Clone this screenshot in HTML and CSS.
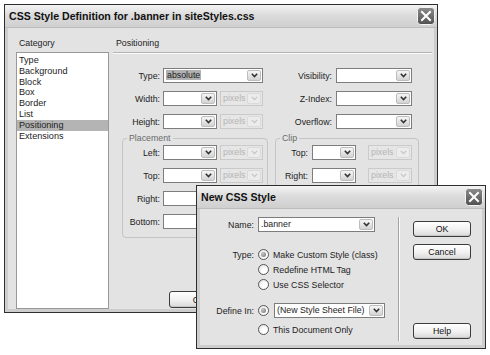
FILE: index.html
```html
<!DOCTYPE html>
<html lang="en">
<head>
    <meta charset="UTF-8">
    <title>CSS Style Definition</title>
    <link rel="stylesheet" href="styles.css">
</head>
<body>
<div class="desk">

    <!-- CSS Style Definition dialog -->
    <div class="window main-window">
        <div class="titlebar">
            <span class="title">CSS Style Definition for .banner in siteStyles.css</span>
            <svg class="close-btn" width="18" height="18" viewBox="0 0 18 18">
                <defs>
                    <linearGradient id="cg1" x1="0" y1="0" x2="0" y2="1">
                        <stop offset="0" stop-color="#8c8c8c"/>
                        <stop offset="1" stop-color="#505050"/>
                    </linearGradient>
                </defs>
                <rect x="0.5" y="0.5" width="17" height="17" rx="3" fill="url(#cg1)" stroke="#f4f4f4"/>
                <path d="M5 5 L13 13 M13 5 L5 13" stroke="#fff" stroke-width="2" stroke-linecap="square"/>
            </svg>
        </div>
        <div class="main-body">
            <div class="cat-col">
                <div class="col-label">Category</div>
                <ul class="cat-list">
                    <li>Type</li>
                    <li>Background</li>
                    <li>Block</li>
                    <li>Box</li>
                    <li>Border</li>
                    <li>List</li>
                    <li class="selected">Positioning</li>
                    <li>Extensions</li>
                </ul>
            </div>
            <div class="panel">
                <div class="panel-head">Positioning</div>

                <div class="pos-grid">
                    <span class="field-label">Type:</span>
                    <div class="combo"><span class="val"><span class="hl">absolute</span></span><span class="arrow"><svg width="7" height="5" viewBox="0 0 7 5"><polyline points="0.8,0.8 3.5,3.6 6.2,0.8" fill="none" stroke="#333" stroke-width="1.6"/></svg></span></div>
                    <span class="field-label wide-label">Visibility:</span>
                    <div class="combo"><span class="val"></span><span class="arrow"><svg width="7" height="5" viewBox="0 0 7 5"><polyline points="0.8,0.8 3.5,3.6 6.2,0.8" fill="none" stroke="#333" stroke-width="1.6"/></svg></span></div>

                    <span class="field-label">Width:</span>
                    <div class="pair">
                        <div class="combo w54"><span class="val"></span><span class="arrow"><svg width="7" height="5" viewBox="0 0 7 5"><polyline points="0.8,0.8 3.5,3.6 6.2,0.8" fill="none" stroke="#333" stroke-width="1.6"/></svg></span></div>
                        <div class="combo off w43"><span class="val">pixels</span><span class="arrow"><svg width="7" height="5" viewBox="0 0 7 5"><polyline points="0.8,0.8 3.5,3.6 6.2,0.8" fill="none" stroke="#c4c4c4" stroke-width="1.2"/></svg></span></div>
                    </div>
                    <span class="field-label wide-label">Z-Index:</span>
                    <div class="combo"><span class="val"></span><span class="arrow"><svg width="7" height="5" viewBox="0 0 7 5"><polyline points="0.8,0.8 3.5,3.6 6.2,0.8" fill="none" stroke="#333" stroke-width="1.6"/></svg></span></div>

                    <span class="field-label">Height:</span>
                    <div class="pair">
                        <div class="combo w54"><span class="val"></span><span class="arrow"><svg width="7" height="5" viewBox="0 0 7 5"><polyline points="0.8,0.8 3.5,3.6 6.2,0.8" fill="none" stroke="#333" stroke-width="1.6"/></svg></span></div>
                        <div class="combo off w43"><span class="val">pixels</span><span class="arrow"><svg width="7" height="5" viewBox="0 0 7 5"><polyline points="0.8,0.8 3.5,3.6 6.2,0.8" fill="none" stroke="#c4c4c4" stroke-width="1.2"/></svg></span></div>
                    </div>
                    <span class="field-label wide-label">Overflow:</span>
                    <div class="combo"><span class="val"></span><span class="arrow"><svg width="7" height="5" viewBox="0 0 7 5"><polyline points="0.8,0.8 3.5,3.6 6.2,0.8" fill="none" stroke="#333" stroke-width="1.6"/></svg></span></div>
                </div>

                <div class="groups">
                    <fieldset class="group placement">
                        <legend>Placement</legend>
                        <div class="group-rows">
                            <div class="g-row"><span class="g-label">Left:</span><div class="combo w54"><span class="val"></span><span class="arrow"><svg width="7" height="5" viewBox="0 0 7 5"><polyline points="0.8,0.8 3.5,3.6 6.2,0.8" fill="none" stroke="#333" stroke-width="1.6"/></svg></span></div><div class="combo off w43"><span class="val">pixels</span><span class="arrow"><svg width="7" height="5" viewBox="0 0 7 5"><polyline points="0.8,0.8 3.5,3.6 6.2,0.8" fill="none" stroke="#c4c4c4" stroke-width="1.2"/></svg></span></div></div>
                            <div class="g-row"><span class="g-label">Top:</span><div class="combo w54"><span class="val"></span><span class="arrow"><svg width="7" height="5" viewBox="0 0 7 5"><polyline points="0.8,0.8 3.5,3.6 6.2,0.8" fill="none" stroke="#333" stroke-width="1.6"/></svg></span></div><div class="combo off w43"><span class="val">pixels</span><span class="arrow"><svg width="7" height="5" viewBox="0 0 7 5"><polyline points="0.8,0.8 3.5,3.6 6.2,0.8" fill="none" stroke="#c4c4c4" stroke-width="1.2"/></svg></span></div></div>
                            <div class="g-row"><span class="g-label">Right:</span><div class="combo w54"><span class="val"></span><span class="arrow"><svg width="7" height="5" viewBox="0 0 7 5"><polyline points="0.8,0.8 3.5,3.6 6.2,0.8" fill="none" stroke="#333" stroke-width="1.6"/></svg></span></div><div class="combo off w43"><span class="val">pixels</span><span class="arrow"><svg width="7" height="5" viewBox="0 0 7 5"><polyline points="0.8,0.8 3.5,3.6 6.2,0.8" fill="none" stroke="#c4c4c4" stroke-width="1.2"/></svg></span></div></div>
                            <div class="g-row"><span class="g-label">Bottom:</span><div class="combo w54"><span class="val"></span><span class="arrow"><svg width="7" height="5" viewBox="0 0 7 5"><polyline points="0.8,0.8 3.5,3.6 6.2,0.8" fill="none" stroke="#333" stroke-width="1.6"/></svg></span></div><div class="combo off w43"><span class="val">pixels</span><span class="arrow"><svg width="7" height="5" viewBox="0 0 7 5"><polyline points="0.8,0.8 3.5,3.6 6.2,0.8" fill="none" stroke="#c4c4c4" stroke-width="1.2"/></svg></span></div></div>
                        </div>
                    </fieldset>
                    <fieldset class="group clip">
                        <legend>Clip</legend>
                        <div class="group-rows">
                            <div class="g-row"><span class="g-label">Top:</span><div class="combo w44"><span class="val"></span><span class="arrow"><svg width="7" height="5" viewBox="0 0 7 5"><polyline points="0.8,0.8 3.5,3.6 6.2,0.8" fill="none" stroke="#333" stroke-width="1.6"/></svg></span></div><div class="combo off w44"><span class="val">pixels</span><span class="arrow"><svg width="7" height="5" viewBox="0 0 7 5"><polyline points="0.8,0.8 3.5,3.6 6.2,0.8" fill="none" stroke="#c4c4c4" stroke-width="1.2"/></svg></span></div></div>
                            <div class="g-row"><span class="g-label">Right:</span><div class="combo w44"><span class="val"></span><span class="arrow"><svg width="7" height="5" viewBox="0 0 7 5"><polyline points="0.8,0.8 3.5,3.6 6.2,0.8" fill="none" stroke="#333" stroke-width="1.6"/></svg></span></div><div class="combo off w44"><span class="val">pixels</span><span class="arrow"><svg width="7" height="5" viewBox="0 0 7 5"><polyline points="0.8,0.8 3.5,3.6 6.2,0.8" fill="none" stroke="#c4c4c4" stroke-width="1.2"/></svg></span></div></div>
                            <div class="g-row"><span class="g-label">Bottom:</span><div class="combo w44"><span class="val"></span><span class="arrow"><svg width="7" height="5" viewBox="0 0 7 5"><polyline points="0.8,0.8 3.5,3.6 6.2,0.8" fill="none" stroke="#333" stroke-width="1.6"/></svg></span></div><div class="combo off w44"><span class="val">pixels</span><span class="arrow"><svg width="7" height="5" viewBox="0 0 7 5"><polyline points="0.8,0.8 3.5,3.6 6.2,0.8" fill="none" stroke="#c4c4c4" stroke-width="1.2"/></svg></span></div></div>
                            <div class="g-row"><span class="g-label">Left:</span><div class="combo w44"><span class="val"></span><span class="arrow"><svg width="7" height="5" viewBox="0 0 7 5"><polyline points="0.8,0.8 3.5,3.6 6.2,0.8" fill="none" stroke="#333" stroke-width="1.6"/></svg></span></div><div class="combo off w44"><span class="val">pixels</span><span class="arrow"><svg width="7" height="5" viewBox="0 0 7 5"><polyline points="0.8,0.8 3.5,3.6 6.2,0.8" fill="none" stroke="#c4c4c4" stroke-width="1.2"/></svg></span></div></div>
                        </div>
                    </fieldset>
                </div>

                <div class="btn-row">
                    <button class="btn">OK</button>
                    <button class="btn">Cancel</button>
                    <button class="btn">Apply</button>
                    <button class="btn">Help</button>
                </div>
            </div>
        </div>
    </div>

    <!-- New CSS Style dialog -->
    <div class="window new-window">
        <div class="titlebar">
            <span class="title">New CSS Style</span>
            <svg class="close-btn" width="18" height="18" viewBox="0 0 18 18">
                <defs>
                    <linearGradient id="cg2" x1="0" y1="0" x2="0" y2="1">
                        <stop offset="0" stop-color="#8c8c8c"/>
                        <stop offset="1" stop-color="#505050"/>
                    </linearGradient>
                </defs>
                <rect x="0.5" y="0.5" width="17" height="17" rx="3" fill="url(#cg2)" stroke="#f4f4f4"/>
                <path d="M5 5 L13 13 M13 5 L5 13" stroke="#fff" stroke-width="2" stroke-linecap="square"/>
            </svg>
        </div>
        <div class="new-body">
            <div class="new-form">
                <div class="n-row">
                    <span class="n-label">Name:</span>
                    <div class="combo w117"><span class="val">.banner</span><span class="arrow"><svg width="7" height="5" viewBox="0 0 7 5"><polyline points="0.8,0.8 3.5,3.6 6.2,0.8" fill="none" stroke="#333" stroke-width="1.6"/></svg></span></div>
                </div>
                <div class="n-row type-first">
                    <span class="n-label">Type:</span>
                    <span class="radio checked"></span><span class="r-text">Make Custom Style (class)</span>
                </div>
                <div class="n-row">
                    <span class="n-label"></span>
                    <span class="radio"></span><span class="r-text">Redefine HTML Tag</span>
                </div>
                <div class="n-row">
                    <span class="n-label"></span>
                    <span class="radio"></span><span class="r-text">Use CSS Selector</span>
                </div>
                <div class="n-row define-row">
                    <span class="n-label">Define In:</span>
                    <span class="radio checked"></span>
                    <div class="combo w111"><span class="val">(New Style Sheet File)</span><span class="arrow"><svg width="7" height="5" viewBox="0 0 7 5"><polyline points="0.8,0.8 3.5,3.6 6.2,0.8" fill="none" stroke="#333" stroke-width="1.6"/></svg></span></div>
                </div>
                <div class="n-row doc-row">
                    <span class="n-label"></span>
                    <span class="radio"></span><span class="r-text">This Document Only</span>
                </div>
            </div>
            <div class="sep"></div>
            <div class="new-btns">
                <button class="btn">OK</button>
                <button class="btn">Cancel</button>
                <button class="btn help">Help</button>
            </div>
        </div>
    </div>

</div>
</body>
</html>
```

FILE: styles.css
```css
/* Reset */
* {
    margin: 0;
    padding: 0;
    box-sizing: border-box;
}

body {
    background: #fff;
    font-family: 'Liberation Sans', Arial, sans-serif;
    font-size: 8.8px;
    color: #1c1c1c;
}

.desk {
    position: relative;
    width: 490px;
    height: 355px;
    overflow: hidden;
}

/* Windows */
.window {
    position: absolute;
    display: flex;
    flex-direction: column;
    background: #e3e3e3;
    border: 1px solid #2e2e2e;
    box-shadow: inset 0 0 0 3px #cdcdcd;
}

.main-window {
    left: 4px;
    top: 4px;
    width: 434px;
    height: 309px;
}

.new-window {
    left: 196px;
    top: 185px;
    width: 290px;
    height: 164px;
}

.titlebar {
    flex: none;
    height: 23px;
    display: flex;
    align-items: center;
    justify-content: space-between;
    padding: 0 2px 0 4px;
    background: linear-gradient(#f4f4f4, #dcdcdc 45%, #cfcfcf);
    border-bottom: 1px solid #bcbcbc;
}

.title {
    font-weight: bold;
    font-size: 10.6px;
    color: #111;
}

.close-btn {
    display: block;
}

/* Combo boxes */
.combo {
    display: flex;
    height: 15px;
    background: #fff;
    border: 1px solid #7d7d7d;
}

.combo .val {
    flex: 1;
    padding-left: 2px;
    line-height: 13px;
    white-space: nowrap;
    overflow: hidden;
}

.combo .hl {
    background: #b0b0b0;
    padding: 0 1px;
}

.combo .arrow {
    flex: none;
    width: 14px;
    margin: 1px;
    display: flex;
    align-items: center;
    justify-content: center;
    border: 1px solid #bdbdbd;
    border-radius: 2px;
    background: linear-gradient(#f6f6f6, #d3d3d3);
}

.combo.off {
    background: #e6e6e6;
    border-color: #cacaca;
}

.combo.off .val {
    color: #b4b4b4;
}

.combo.off .arrow {
    border-color: #dadada;
    background: #ececec;
}

.w43 { width: 43px; }
.w44 { width: 44px; }
.w54 { width: 54px; }
.w111 { width: 111px; }
.w117 { width: 117px; }

/* Main dialog body */
.main-body {
    flex: 1;
    min-height: 0;
    display: flex;
    gap: 4px;
    padding: 9px 5px 3px 11px;
}

.cat-col {
    width: 93px;
    display: flex;
    flex-direction: column;
}

.col-label,
.panel-head {
    line-height: 12px;
    padding-left: 3px;
}

.col-label {
    margin-bottom: 3px;
}

.cat-list {
    flex: 1;
    list-style: none;
    background: #fff;
    border: 1px solid #999;
    padding-top: 2px;
    font-size: 9.1px;
}

.cat-list li {
    line-height: 10.8px;
    padding-left: 2px;
}

.cat-list .selected {
    background: #b4b4b4;
}

.panel {
    flex: 1;
    display: flex;
    flex-direction: column;
}

.panel-head {
    padding-bottom: 3px;
    border-bottom: 1px solid #b5b5b5;
    box-shadow: 0 1px 0 #fafafa;
}

.pos-grid {
    display: grid;
    grid-template-columns: 50px 100px 73px 76px;
    grid-auto-rows: 15px;
    row-gap: 8px;
    align-items: center;
    margin-top: 15px;
}

.field-label {
    text-align: right;
    padding-right: 3px;
}

.pos-grid .wide-label {
    padding-right: 4px;
}

.pair {
    display: flex;
    gap: 3px;
}

/* Group boxes */
.groups {
    display: flex;
    gap: 7px;
    margin-top: 3px;
    padding-left: 9px;
}

.group {
    border: 1px solid #c4c4c4;
    border-radius: 4px;
    padding: 1px 0 8px;
    min-width: 0;
}

.group legend {
    color: #6a6a6a;
    line-height: 12px;
    padding: 0 2px;
    margin-left: 4px;
}

.placement {
    width: 146px;
}

.clip {
    width: 144px;
}

.group-rows {
    display: flex;
    flex-direction: column;
    gap: 8px;
}

.g-row {
    display: flex;
    align-items: center;
    height: 15px;
}

.g-label {
    flex: none;
    text-align: right;
}

.placement .g-label {
    width: 40px;
    padding-right: 3px;
}

.placement .combo.off {
    margin-left: 3px;
}

.clip .g-label {
    width: 36px;
    padding-right: 4px;
}

.clip .combo.off {
    margin-left: 12px;
}

.btn-row {
    margin-top: auto;
    margin-bottom: 1px;
    display: flex;
    gap: 6px;
    padding-left: 56px;
}

/* Buttons */
.btn {
    width: 60px;
    height: 17px;
    font: inherit;
    color: #111;
    border: 1px solid #3c3c3c;
    border-radius: 3px;
    background: linear-gradient(#ffffff, #f0f0f0 55%, #d8d8d8);
    box-shadow: inset 0 -1px 0 #c6c6c6;
}

/* New CSS Style body */
.new-body {
    flex: 1;
    display: flex;
}

.new-form {
    width: 201px;
    padding-top: 8px;
    display: flex;
    flex-direction: column;
}

.n-row {
    display: flex;
    align-items: center;
    height: 15px;
}

.n-label {
    flex: none;
    width: 61px;
    text-align: right;
    padding-right: 4px;
}

.type-first {
    margin-top: 15px;
}

.define-row {
    margin-top: 11px;
}

.doc-row {
    margin-top: 4px;
}

.radio {
    flex: none;
    width: 11px;
    height: 11px;
    border: 1px solid #555;
    border-radius: 50%;
    background: radial-gradient(circle at 65% 65%, #fff 30%, #dcdcdc);
    position: relative;
}

.radio.checked::after {
    content: '';
    position: absolute;
    left: 2px;
    top: 2px;
    width: 5px;
    height: 5px;
    border-radius: 50%;
    background: radial-gradient(circle at 35% 35%, #c8c8c8, #6e6e6e);
}

.r-text {
    margin-left: 4px;
    white-space: nowrap;
}

.define-row .combo {
    margin-left: 5px;
}

.sep {
    width: 2px;
    margin: 8px 0 7px;
    border-left: 1px solid #a4a4a4;
    border-right: 1px solid #fbfbfb;
}

.new-btns {
    display: flex;
    flex-direction: column;
    gap: 7px;
    padding: 12px 0 9px 13px;
}

.new-btns .btn {
    width: 58px;
    height: 16px;
}

.new-btns .help {
    margin-top: auto;
}
```
